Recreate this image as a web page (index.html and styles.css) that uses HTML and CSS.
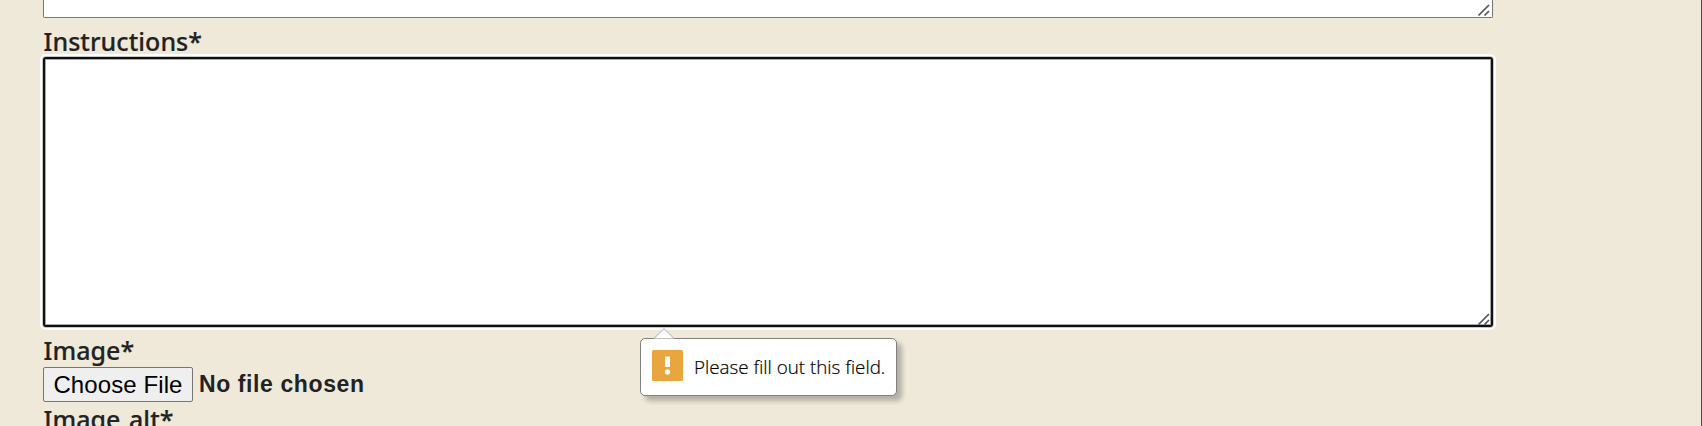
FILE: index.html
```html
<!DOCTYPE html>
<html lang="en">
<head>
<meta charset="utf-8">
<title>Recipe form</title>
<link rel="stylesheet" href="styles.css">
</head>
<body>
<form class="form">
  <div class="area area-top"><svg class="grip" viewBox="0 0 14 14"><path d="M1.500 12.500L12 2M7.500 12.500L12 8"/></svg></div>
  <label class="label label-instructions"><span>Instructions*</span></label>
  <div class="area area-focus">
    <svg class="grip" viewBox="0 0 14 14"><path d="M1.500 12.500L12 2M7.500 12.500L12 8"/></svg>
    <div class="tooltip">
      <svg class="arrow" viewBox="0 0 22 12"><path d="M1 11.500L11 1.500L21 11.500"/></svg>
      <svg class="warn" viewBox="0 0 31 31"><rect width="31" height="31" rx="1.500"/><path d="M13 6.500h5v10.500h-5z"/><circle cx="15.500" cy="22" r="2.700"/></svg>
      <span class="message">Please fill out this field.</span>
    </div>
  </div>
  <label class="label label-image"><span>Image*</span></label>
  <div class="file"><button type="button" class="choose"><span>Choose File</span></button><span class="status">No file chosen</span></div>
  <label class="label label-alt"><span>Image alt*</span></label>
</form>
</body>
</html>
```
FILE: styles.css
```css
* { box-sizing: border-box; }
body {
  margin: 0;
  height: 426px;
  overflow: hidden;
  background: #eee9d9;
  border-right: 1px solid #4b4f45;
  color: #222;
}
.form { display: flex; flex-direction: column; padding-left: 43px; }
.area { position: relative; width: 1450px; background: #fff; flex: none; }
.area-top { height: 18px; border: 1px solid #767676; border-top: 0; border-radius: 0 0 2px 2px; }
.area-focus {
  height: 270px;
  border: 2px solid #101010;
  border-radius: 3px;
  box-shadow: 0 0 0 1px #c5c8c4, 0 0 0 3px #fff, inset 0 0 0 1px #a5aaa7;
}
.grip { position: absolute; right: 1px; bottom: 0; width: 14px; height: 14px; fill: none; stroke: #555; stroke-width: 1.7; }
.area-focus .grip { right: 0; bottom: -1px; }
.label {
  display: flex;
  flex: none;
  padding-left: .5px;
  font: 500 25px/34px "Noto Sans", sans-serif;
  letter-spacing: .05px;
  word-spacing: 2px;
  white-space: nowrap;
  -webkit-text-stroke: .2px #222;
}
.label-instructions { height: 39px; padding-top: 6px; }
.label-image { height: 40px; padding-top: 6px; }
.label-alt { height: 34px; }
.file { display: flex; align-items: center; height: 35px; gap: 6px; flex: none; }
.choose {
  width: 150px;
  height: 35px;
  padding: 0;
  border: 1px solid #767676;
  border-radius: 2px;
  background: #efefef;
  color: #000;
  font: 24px/33px "Liberation Sans", Arial, sans-serif;
  letter-spacing: .1px;
}
.status {
  font: bold 23px/33px "Liberation Sans", Arial, sans-serif;
  letter-spacing: .6px;
  white-space: nowrap;
}
.tooltip {
  position: absolute;
  left: 595px;
  top: 279px;
  width: 257px;
  height: 58px;
  display: flex;
  align-items: center;
  padding: 0 0 4px 11px;
  gap: 11px;
  border: 1px solid #808080;
  border-radius: 5px;
  background: #fff;
  box-shadow: 5px 5px 5px rgba(0, 0, 0, .25);
}
.arrow { position: absolute; left: 12px; top: -12px; width: 22px; height: 12px; fill: #fff; stroke: #aaa; }
.warn { width: 31px; height: 31px; flex: none; fill: #fff; }
.warn rect { fill: #e9a53e; }
.message {
  padding-top: 4px;
  font: 300 18.8px/24px "Open Sans", sans-serif;
  color: #000;
  white-space: nowrap;
  -webkit-text-stroke: .2px #000;
}
```
